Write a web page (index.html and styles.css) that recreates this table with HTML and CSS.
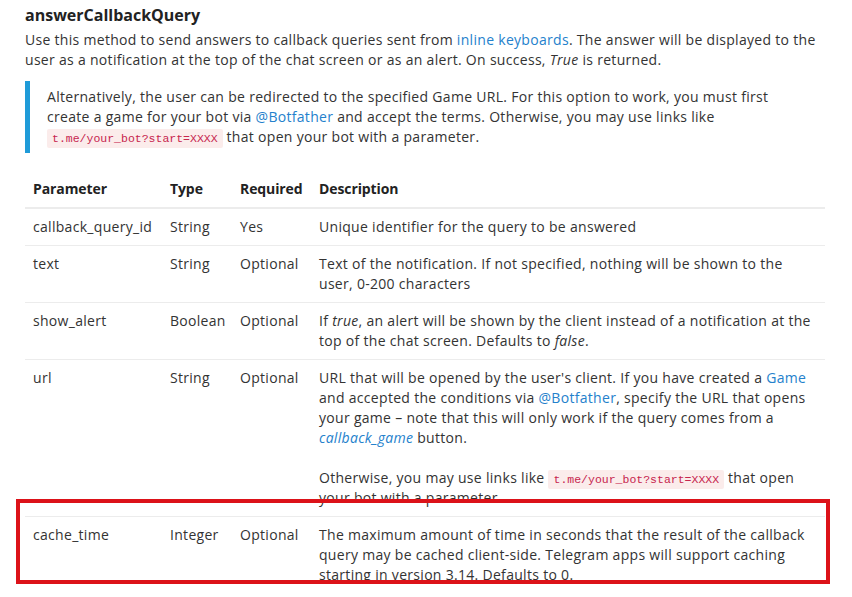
FILE: index.html
```html
<!DOCTYPE html>
<html>
<head>
<meta charset="utf-8">
<link rel="stylesheet" href="styles.css">
</head>
<body>
<div class="page">
  <h4 class="title">answerCallbackQuery</h4>
  <p class="intro">Use this method to send answers to callback queries sent from <a href="#">inline keyboards</a>. The answer will be displayed to the user as a notification at the top of the chat screen or as an alert. On success, <em>True</em> is returned.</p>
  <blockquote class="note">
    <p>Alternatively, the user can be redirected to the specified Game URL. For this option to work, you must first create a game for your bot via <a href="#">@Botfather</a> and accept the terms. Otherwise, you may use links like <code>t.me/your_bot?start=XXXX</code> that open your bot with a parameter.</p>
  </blockquote>
  <table class="params">
    <thead>
      <tr>
        <th class="c-param">Parameter</th>
        <th class="c-type">Type</th>
        <th class="c-req">Required</th>
        <th class="c-desc">Description</th>
      </tr>
    </thead>
    <tbody>
      <tr>
        <td>callback_query_id</td>
        <td>String</td>
        <td>Yes</td>
        <td>Unique identifier for the query to be answered</td>
      </tr>
      <tr>
        <td>text</td>
        <td>String</td>
        <td>Optional</td>
        <td>Text of the notification. If not specified, nothing will be shown to the user, 0-200 characters</td>
      </tr>
      <tr>
        <td>show_alert</td>
        <td>Boolean</td>
        <td>Optional</td>
        <td>If <em>true</em>, an alert will be shown by the client instead of a notification at the top of the chat screen. Defaults to <em>false</em>.</td>
      </tr>
      <tr>
        <td>url</td>
        <td>String</td>
        <td>Optional</td>
        <td>URL that will be opened by the user's client. If you have created a <a href="#">Game</a> and accepted the conditions via <a href="#">@Botfather</a>, specify the URL that opens your game – note that this will only work if the query comes from a <a href="#"><em>callback_game</em></a> button.<br><br>Otherwise, you may use links like <code>t.me/your_bot?start=XXXX</code> that open your bot with a parameter.</td>
      </tr>
      <tr>
        <td>cache_time</td>
        <td>Integer</td>
        <td>Optional</td>
        <td>The maximum amount of time in seconds that the result of the callback query may be cached client-side. Telegram apps will support caching starting in version 3.14. Defaults to 0.</td>
      </tr>
    </tbody>
  </table>
  <div class="highlight"></div>
</div>
</body>
</html>
```

FILE: styles.css
```css
html, body {
  margin: 0;
  padding: 0;
  background: #ffffff;
}

body {
  font-family: "Open Sans", "Liberation Sans", sans-serif;
  font-size: 14px;
  line-height: 20px;
  letter-spacing: 0.3px;
  color: #333333;
}

.page {
  position: relative;
  width: 800px;
  padding: 5px 27px 0 25px;
}

a {
  color: #2481cc;
  text-decoration: none;
}

.title {
  margin: 0 0 5px;
  font-size: 16px;
  line-height: 20px;
  font-weight: 700;
  letter-spacing: 0;
  color: #222222;
}

.intro {
  margin: 0 0 11px;
}

.note {
  margin: 0 0 18px;
  padding: 6px 20px 6px 17px;
  border-left: 5px solid #1f9bd8;
}

.note p {
  margin: 0;
}

code {
  font-family: "Liberation Mono", "DejaVu Sans Mono", monospace;
  font-size: 11.5px;
  line-height: 1;
  letter-spacing: 0;
  color: #c7254e;
  background: #fbeceb;
  padding: 3px 5px;
  border-radius: 2px;
}

.params {
  width: 800px;
  table-layout: fixed;
  border-collapse: collapse;
  border-spacing: 0;
}

.params th,
.params td {
  text-align: left;
  vertical-align: top;
  padding: 8px;
  white-space: normal;
}

.params th {
  font-weight: 700;
  letter-spacing: -0.1px;
  color: #222222;
  border-bottom: 2px solid #ececec;
}

.params td {
  border-top: 1px solid #ececec;
}

.params thead + tbody tr:first-child td {
  border-top: 0;
}

.params td:first-child {
  white-space: nowrap;
}

.c-param { width: 121px; }
.c-type { width: 54px; }
.c-req { width: 63px; }

.highlight {
  position: absolute;
  left: 16px;
  top: 499px;
  width: 806px;
  height: 77px;
  border: 4px solid #dc1219;
}
```
